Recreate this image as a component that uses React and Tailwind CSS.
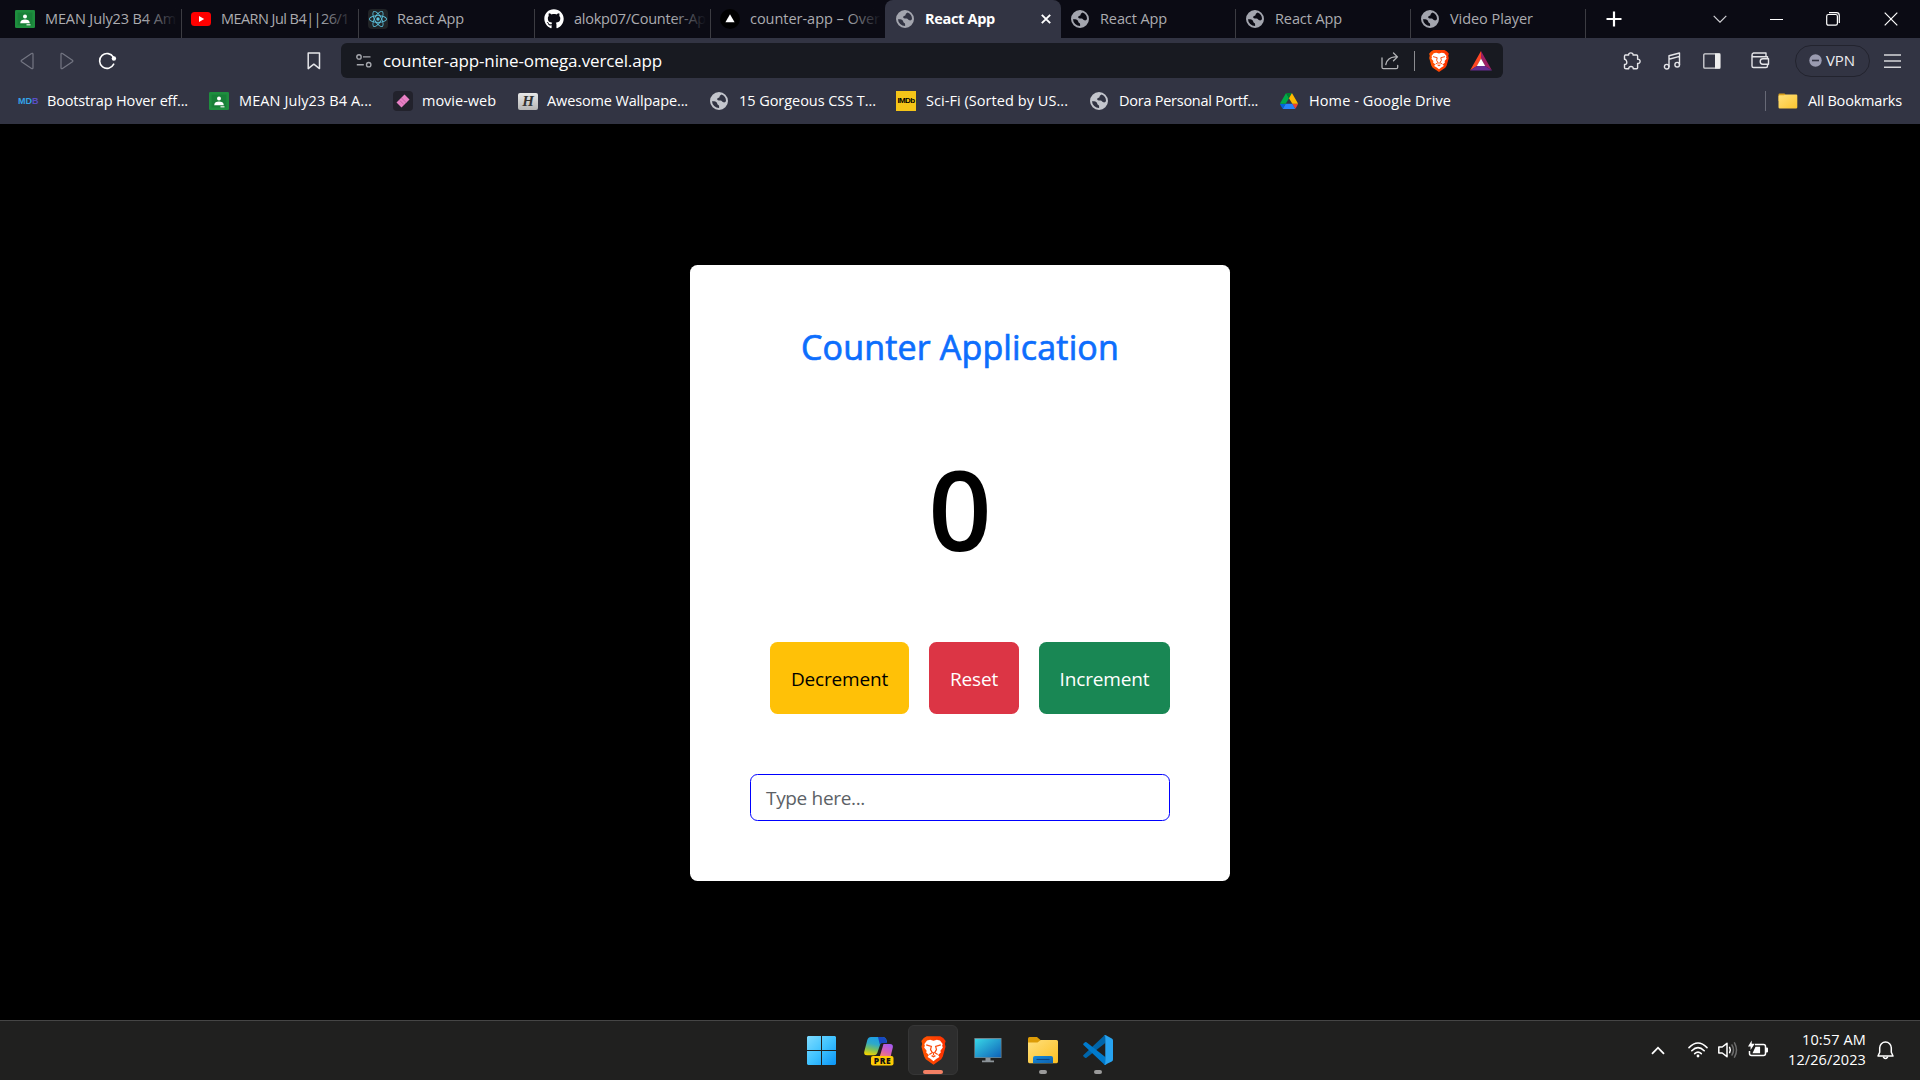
import React, { useLayoutEffect, useRef, useState } from "react";
import { FaGithub } from "react-icons/fa";
import { SiReact } from "react-icons/si";

/* Single line of text, tracked so that it fills the given width. */
function Fit({ w, className = "", children }) {
  const ref = useRef(null);
  const [ls, setLs] = useState(0);
  useLayoutEffect(() => {
    const natural = ref.current.getBoundingClientRect().width;
    setLs((w - natural) / String(children).length);
  }, [w, children]);
  return (
    <span ref={ref} className={"inline-block whitespace-pre shrink-0 " + className} style={{ letterSpacing: ls + "px" }}>
      {children}
    </span>
  );
}

const Classroom = () => (
  <svg className="w-5 h-[18px] block" viewBox="0 0 20 18">
    <rect width="20" height="18" rx="1.2" fill="#1e8e3e" />
    <rect x="2.6" y="2.6" width="14.8" height="12.8" fill="#188038" />
    <circle cx="10" cy="6.6" r="2" fill="#fff" />
    <path d="M5.2 13.2c0-2.600 2.200-3.700 4.800-3.700s4.800 1.100 4.800 3.700z" fill="#fff" />
    <rect x="11.500" y="14.200" width="4" height="1.200" fill="#e8f0e8" />
  </svg>
);

const Youtube = () => (
  <svg className="w-5 h-[14px] block" viewBox="0 0 20 14">
    <rect width="20" height="14" rx="3.500" fill="#f00" />
    <path d="M8 4l5.200 3L8 10z" fill="#fff" />
  </svg>
);

const ReactIcon = () => (
  <span className="w-5 h-5 rounded-sm bg-[#202326] flex items-center justify-center">
    <SiReact className="w-[18px] h-[18px] text-[#5cc4e0]" />
  </span>
);

const Globe = ({ className = "text-[#a3a5ae]" }) => (
  <span className="w-5 h-5 -ml-px flex items-center justify-center">
    <svg viewBox="0 0 18 18" className={"w-[18px] h-[18px] " + className}>
      <path fillRule="evenodd" fill="currentColor" d="M9 0a9 9 0 1 0 0 18A9 9 0 0 0 9 0zM2 9.300c1.700-.3 4 0 4.900 1.400.6 1 .2 1.900 1.300 2.200 1 .3 1 1 .9 3.100A7 7 0 0 1 2 9.300zM11.600 2.500A7 7 0 0 1 16 9c-.4 1.200-1.500 1.700-2.700 1.300-1.500-.5-1.300-1.700-2.700-1.800-1.500 0-3 .2-3.400-1-.4-1.400 1.300-1.300 2-1.900.8-.8.100-1.400.9-2z" />
    </svg>
  </span>
);

const Vercel = () => (
  <svg className="w-5 h-5 block" viewBox="0 0 20 20">
    <circle cx="10" cy="10" r="10" fill="#000" />
    <path d="M10 5.200l4.600 8H5.400z" fill="#fff" />
  </svg>
);

const LION = "M5 1h10l2.200 1.300 1.800 2.200-.6 2 .5 2.200-2 7.300-1.200 2L10 22l-5.700-4-1.200-2L1.100 8.700l.5-2.200-.6-2 1.800-2.200z";
const Brave = ({ className }) => (
  <svg className={className} viewBox="0 0 20 23" preserveAspectRatio="none">
    <defs>
      <linearGradient id="lion" x1="0" x2="1"><stop stopColor="#ff5601" /><stop offset="1" stopColor="#ff3000" /></linearGradient>
    </defs>
    <path d={LION} fill="url(#lion)" />
    <path fill="#fff" d="M10 4.300l2.500-.7 2.300.4 2 2.700-.4 1.300.5 1.300-1.800 2.300.3 1.400-2 1.800 1 1.500-2.400 1.500-2 1.600-2-1.600-2.400-1.500 1-1.500-2-1.800.3-1.400-1.800-2.300.5-1.300-.4-1.300 2-2.700 2.300-.4z" />
    <path d="M4.600 7.300l3.800 1.100-.6 2.400 1.300 2.300-2.200 1.400M15.400 7.300l-3.800 1.100.6 2.400-1.300 2.300 2.200 1.400M8.600 15.300l1.400.9 1.400-.9M10 12.800v2.200" fill="none" stroke="#fb4a0c" strokeWidth=".9" />
  </svg>
);

const Bat = () => (
  <svg className="w-[22px] h-[20px] block" viewBox="0 0 22 20">
    <path d="M11 0L0 19.500 7 15l4-7.200z" fill="#ff4724" />
    <path d="M11 0l11 19.500L15 15l-4-7.200z" fill="#9e1f63" />
    <path d="M0 19.500h22L15.200 15H6.800z" fill="#662d91" />
    <path d="M11 7.600l4.200 7.500H6.800z" fill="#fff" />
  </svg>
);

const Drive = () => (
  <svg className="w-[18px] h-4 block" viewBox="0 0 87.3 78">
    <path d="m6.6 66.850 3.850 6.650c.8 1.400 1.950 2.500 3.300 3.300l13.750-23.800h-27.500c0 1.550.4 3.100 1.200 4.500z" fill="#0066da" />
    <path d="m43.650 25-13.750-23.800c-1.350.8-2.500 1.900-3.300 3.300l-25.400 44a9.060 9.060 0 0 0 -1.200 4.500h27.500z" fill="#00ac47" />
    <path d="m73.550 76.800c1.350-.8 2.500-1.900 3.300-3.300l1.600-2.750 7.650-13.250c.8-1.400 1.200-2.950 1.200-4.500h-27.502l5.852 11.500z" fill="#ea4335" />
    <path d="m43.650 25 13.750-23.800c-1.350-.8-2.900-1.200-4.500-1.200h-18.500c-1.600 0-3.150.45-4.500 1.200z" fill="#00832d" />
    <path d="m59.800 53h-32.300l-13.750 23.800c1.350.8 2.900 1.200 4.500 1.200h50.800c1.600 0 3.150-.45 4.500-1.200z" fill="#2684fc" />
    <path d="m73.400 26.500-12.700-22c-.8-1.400-1.950-2.500-3.300-3.300l-13.750 23.800 16.150 28h27.450c0-1.550-.4-3.100-1.200-4.500z" fill="#ffba00" />
  </svg>
);

const TABS = [
  { icon: <Classroom />, t: "MEAN July23 B4 Am", w: 131, fade: true, box: "w-[182px] pl-[15px]", gap: "w-[30px]" },
  { icon: <Youtube />, t: "MEARN Jul B4||26/1", w: 128, fade: true, box: "w-[177px] pl-[9px]", gap: "w-[30px]" },
  { icon: <ReactIcon />, t: "React App", w: 67, box: "w-[176px] pl-[9px]", gap: "w-[29px]" },
  { icon: <FaGithub className="w-5 h-5 text-white" />, t: "alokp07/Counter-Ap", w: 132, fade: true, box: "w-[176px] pl-[9px]", gap: "w-[30px]" },
  { icon: <Vercel />, t: "counter-app – Over", w: 130, fade: true, box: "w-[174px] pl-[9px]", gap: "w-[30px]", nosep: true },
  { icon: <Globe />, t: "React App", w: 70, active: true, box: "w-[176px] pl-[11px]", gap: "w-[29px]", nosep: true },
  { icon: <Globe />, t: "React App", w: 67, box: "w-[175px] pl-[10px]", gap: "w-[29px]" },
  { icon: <Globe />, t: "React App", w: 67, box: "w-[175px] pl-[10px]", gap: "w-[29px]" },
  { icon: <Globe />, t: "Video Player", w: 83, box: "w-[175px] pl-[10px]", gap: "w-[29px]" },
];

function Tab({ icon, t, w, fade, active, box, gap, nosep }) {
  return (
    <div className={"h-[38px] shrink-0 flex items-center relative " + box + (active ? " bg-[#323443] rounded-t-lg" : "")}>
      <div className={"shrink-0 " + gap}>{icon}</div>
      <div className={"relative h-6 leading-6 flex-1 " + (active ? "text-white font-bold" : "text-[#acacb0]")}>
        <Fit w={w}>{t}</Fit>
        {fade && <div className="absolute right-0 top-0 h-6 w-[38px] bg-linear-to-r from-transparent to-[#0b0b14] to-90%" />}
      </div>
      {active && (
        <svg className="w-[10px] h-[10px] mr-[10px] shrink-0" viewBox="0 0 10 10"><path d="M.8.8l8.400 8.400M9.200.8L.8 9.200" stroke="#fff" strokeWidth="1.900" /></svg>
      )}
      {!nosep && <div className="w-px h-[29px] self-end bg-[#3c3c42]" />}
    </div>
  );
}

const BOOKMARKS = [
  { icon: <span className="block w-5 leading-5 font-['Liberation_Sans'] font-bold text-[9px] tracking-[0px] text-[#35a3e8]">MD<span className="text-[#5a4fc4]">B</span></span>, t: "Bootstrap Hover eff...", w: 141, box: "ml-[18px] w-[191px]", narrow: true },
  { icon: <Classroom />, t: "MEAN July23 B4 A...", w: 133, box: "w-[184px]" },
  { icon: <span className="w-5 h-5 rounded-sm bg-[#22222c] flex items-center justify-center"><svg className="w-4 h-4" viewBox="0 0 16 16"><path d="M9.500 1.500l5 5-8 8-5-5z" fill="#e880c5" /><path d="M6.500 5l5 5M4.800 7.500l4 4" stroke="#b85a9c" strokeWidth=".8" /></svg></span>, t: "movie-web", w: 74, box: "w-[125px]", narrow: true },
  { icon: <span className="flex w-5 h-[17px] rounded-xs bg-linear-to-b from-[#e8e8e8] to-[#b5b5b5] items-center justify-center font-['Liberation_Serif'] italic font-bold text-[15px] text-[#333]">H</span>, t: "Awesome Wallpape...", w: 141, box: "w-[192px]", narrow: true },
  { icon: <Globe className="text-[#c3c5cc]" />, t: "15 Gorgeous CSS T...", w: 137, box: "w-[186px]", narrow: true },
  { icon: <span className="flex w-5 h-5 bg-[#f5c518] items-center justify-center font-['Liberation_Sans'] font-bold text-[8px] tracking-[-0.600px] text-black">IMDb</span>, t: "Sci-Fi (Sorted by US...", w: 142, box: "w-[194px]" },
  { icon: <Globe className="text-[#c3c5cc]" />, t: "Dora Personal Portf...", w: 139, box: "w-[190px]", narrow: true },
  { icon: <Drive />, t: "Home - Google Drive", w: 142, box: "w-[190px]", narrow: true },
];

const Folder = () => (
  <svg className="w-[20px] h-4 block" viewBox="0 0 20 16">
    <defs><linearGradient id="fold" x1="0" y1="0" x2="1" y2="1"><stop stopColor="#ffe07a" /><stop offset="1" stopColor="#fbc52f" /></linearGradient></defs>
    <path d="M.5 1.500Q.5.400 1.500.400H6.500L8.500 2.500H12V8H.5z" fill="#d9a01c" />
    <path d="M.5 3.200Q.5 2.300 1.500 2.300H6L8 1.500H18.200Q19.300 1.500 19.300 2.600V14.200Q19.300 15.500 18 15.500H1.800Q.5 15.500.5 14.200z" fill="url(#fold)" />
  </svg>
);

const sk = { fill: "none", stroke: "#e4e4e8", strokeLinecap: "round", strokeLinejoin: "round" };

function Toolbar() {
  return (
    <div className="h-[44px] pt-[5px] flex items-start shrink-0">
      <div className="h-[35px] w-[341px] flex items-center">
        <svg className="w-[14px] h-[18px] ml-5" viewBox="0 0 14 18"><path d="M13 2.200v13.600c0 .9-.8 1.200-1.500.7L1.600 9.800c-.6-.5-.6-1.100 0-1.600L11.500 1.500c.7-.5 1.500-.2 1.500.7z" fill="none" stroke="#747683" strokeWidth="1.200" /></svg>
        <svg className="w-[14px] h-[18px] ml-[26px]" viewBox="0 0 14 18"><path d="M1 2.200v13.600c0 .9.8 1.200 1.500.7l9.900-6.700c.6-.5.6-1.100 0-1.600L2.500 1.500C1.800 1 1 1.300 1 2.200z" fill="none" stroke="#747683" strokeWidth="1.200" /></svg>
        <svg className="w-[19px] h-[18px] ml-6" viewBox="0 0 19 18"><path d="M15.700 12.200A7.400 7.400 0 1 1 15.400 5.200" fill="none" stroke="#fff" strokeWidth="1.600" strokeLinecap="round" /><circle cx="15.900" cy="6.500" r="2.200" fill="#fff" /></svg>
        <svg className="w-[14px] h-[18px] ml-[190px]" viewBox="0 0 14 18"><path d="M1.200 1h11.300v15.600L6.850 12.200 1.200 16.600z" fill="none" stroke="#e6e6ea" strokeWidth="1.500" strokeLinejoin="round" /></svg>
      </div>
      <div className="h-[35px] w-[1162px] rounded-md bg-[#181a21] flex items-center shrink-0">
        <svg className="w-4 h-4 ml-[15px]" viewBox="0 0 16 16" fill="none" stroke="#a6a8ae" strokeWidth="1.400"><circle cx="3" cy="3.900" r="2.200" /><path d="M7 3.900h7.500M.8 11.700h7M" /><circle cx="12.700" cy="11.700" r="2.200" /></svg>
        <Fit w={279} className="ml-[11px] text-[17px] text-white leading-[35px]">counter-app-nine-omega.vercel.app</Fit>
        <div className="flex-1" />
        <svg className="w-[18px] h-[18px]" viewBox="0 0 18 18" fill="none" stroke="#b4b5b8" strokeWidth="1.300" strokeLinecap="round" strokeLinejoin="round"><path d="M1 6v9.200Q1 16.700 2.500 16.700H15.200Q16.700 16.700 16.700 15.200V13.500M12.500 1l4 3.900-4 3.900M16.200 4.900H14Q6.500 5.200 4.800 12.500" /></svg>
        <div className="w-px h-5 bg-[#8b8c90] ml-[15px]" />
        <Brave className="w-[22px] h-[24px] ml-[13px]" />
        <div className="ml-5 mr-[11px]"><Bat /></div>
      </div>
      <div className="h-[35px] flex items-center">
        <svg className="w-[18px] h-[18px] ml-[120px]" viewBox="0 0 18 18" {...sk} strokeWidth="1.400"><path d="M2 3h3.700C5.400 1.700 6.300.9 7.800.9S10.300 1.700 10 3h3.600q1 0 1 1v3.200c1.600-.2 2.500.7 2.500 2.100s-.9 2.300-2.500 2.100v4.300q0 1-1 1H10.200c.2-1.500-.8-2.200-2.200-2.200s-2.400.7-2.200 2.200H3q-1.500 0-1.500-1.200v-3c1.500.1 2.300-.8 2.300-2.100S3 7.200 1.500 7.300V4z" /></svg>
        <svg className="w-[18px] h-[18px] ml-[22px]" viewBox="0 0 18 18" {...sk} strokeWidth="1.400"><path d="M6 14.500V3.800L16.500 1v11.500M6 7.200l10.500-2.800" /><circle cx="3.700" cy="14.700" r="2.300" /><circle cx="14.200" cy="12.700" r="2.300" /></svg>
        <svg className="w-[18px] h-4 ml-[22px]" viewBox="0 0 18 16"><rect x=".8" y=".8" width="16" height="14.400" rx="1" fill="none" stroke="#d8d8dc" strokeWidth="1.300" /><path d="M12 .4h5.300v15.200H12z" fill="#eee" /></svg>
        <svg className="w-[19px] h-[17px] ml-[30px]" viewBox="0 0 19 17" {...sk} strokeWidth="1.400"><path d="M16.500 6.500V4.700H2.500Q1 4.700 1 3T2.500 1H15v3.500M1 3v11Q1 15.500 2.500 15.500H15Q16.500 15.500 16.500 14v-1.500M17.500 6.700H11.800Q9.200 6.700 9.200 9.400T11.800 12.200H17.500z" /></svg>
        <div className="w-[75px] h-8 ml-[25px] rounded-full border border-[#22232e] flex items-center">
          <svg className="w-[13px] h-[13px] ml-[13px]" viewBox="0 0 13 13"><circle cx="6.500" cy="6.500" r="6.200" fill="#9a9bb0" /><path d="M3 6.500h7" stroke="#323443" strokeWidth="1.600" /></svg>
          <Fit w={29} className="ml-1 text-[15px] text-[#ececf0] leading-[28px] -mt-0.5">VPN</Fit>
        </div>
        <svg className="w-[17px] h-4 ml-[14px]" viewBox="0 0 17 16"><path d="M0 2h17M0 8h17M0 14.300h17" stroke="#d6d6da" strokeWidth="1.500" /></svg>
      </div>
    </div>
  );
}

const Windows = () => (
  <svg className="w-[29px] h-[29px]" viewBox="0 0 29 29">
    <defs><linearGradient id="win" gradientUnits="userSpaceOnUse" x1="0" y1="0" x2="29" y2="29"><stop stopColor="#7fdcff" /><stop offset=".5" stopColor="#3fc2ff" /><stop offset="1" stopColor="#0a94f5" /></linearGradient></defs>
    <path fill="url(#win)" d="M1 0h13v14H0V1zM15 0h13l1 1v13H15zM0 15h14v14H1l-1-1zM15 15h14v13l-1 1H15z" />
  </svg>
);

const Copilot = () => (
  <svg className="w-[30px] h-[30px]" viewBox="0 0 30 30">
    <defs>
      <linearGradient id="cpa" x1="0.6" y1="0" x2=".3" y2="1"><stop stopColor="#1b9de8" /><stop offset=".4" stopColor="#2fa9c9" /><stop offset=".7" stopColor="#7cc05a" /><stop offset="1" stopColor="#f2d400" /></linearGradient>
      <linearGradient id="cpb" x1=".7" y1="0" x2=".3" y2="1"><stop stopColor="#a65bf0" /><stop offset=".5" stopColor="#d65fb5" /><stop offset="1" stopColor="#ff8a5c" /></linearGradient>
    </defs>
    <path d="M7 1h12q2.500 0 3.300 2.500L23 6h-4q-2 0-2.700 2l-3 9q-.8 2.300-3.300 2.300H3Q-.5 19.300.3 15.500L3.300 4Q4.200 1 7 1z" fill="url(#cpa)" />
    <path d="M14 1h5q2.500 0 3.300 2.500L23 7h-4.500q-2 0-2.700 1.500z" fill="#1748c0" />
    <path d="M19.500 8H26q3.500 0 2.800 3.500L26.500 21q-.5 2-2.500 2h-9z" fill="url(#cpb)" />
    <rect x="7" y="20" width="22.500" height="9.500" rx="2" fill="#ffcb05" />
    <text x="18.200" y="27.800" textAnchor="middle" fontFamily="Open Sans" fontWeight="800" fontSize="8.500" fill="#111" textLength="17">PRE</text>
  </svg>
);

const Monitor = () => (
  <svg className="w-[28px] h-[25px]" viewBox="0 0 28 25">
    <defs><linearGradient id="mon" x1="0" y1="0" x2="1" y2="1"><stop stopColor="#38d6e6" /><stop offset="1" stopColor="#0f62b8" /></linearGradient></defs>
    <rect x=".3" y="0" width="27.200" height="20" fill="#6f8690" rx=".6" />
    <rect x="1" y="1" width="25.800" height="18.200" fill="url(#mon)" />
    <path d="M11.500 20h5v2.500h3.500v1.700H8v-1.700h3.500z" fill="#8d9499" />
  </svg>
);

const Explorer = () => (
  <svg className="w-[30px] h-[27px]" viewBox="0 0 30 27">
    <defs>
      <linearGradient id="exa" x1="0" y1="0" x2="1" y2="1"><stop stopColor="#ffe07c" /><stop offset="1" stopColor="#fcbf22" /></linearGradient>
      <linearGradient id="exb" x1="0" y1="0" x2="1" y2="1"><stop stopColor="#1689d8" /><stop offset="1" stopColor="#0e62b0" /></linearGradient>
    </defs>
    <path d="M0 1.500Q0 0 1.500 0H9l4 3.500V8H0z" fill="#dd9c07" />
    <path d="M0 5.500h9.500L12.800 3H28.500Q30 3 30 4.500v20Q30 26.300 28.500 26.300H1.500Q0 26.300 0 24.500z" fill="url(#exa)" />
    <path d="M5 26.300V21q0-2 2-2H23q2 0 2 2v5.300z" fill="url(#exb)" />
    <path d="M8.500 22.500h13" stroke="#0b4584" strokeWidth="1.100" />
  </svg>
);

const VsCode = () => (
  <svg className="w-[30px] h-[30px]" viewBox="0 0 30 30">
    <path d="M22.300 8L3.500 22.800Q2.700 23.400 2 22.800L.5 21.400Q-.2 20.600.5 20L21.300.6Q22.200-.2 23.300.3z" fill="#0065a9" />
    <path d="M22.300 22L3.500 7.200Q2.700 6.600 2 7.200L.5 8.600Q-.2 9.400.5 10L21.300 29.400Q22.200 30.200 23.300 29.700z" fill="#007acc" />
    <path d="M22 29.800l6.800-3.300Q30 25.900 30 24.600V5.400Q30 4.100 28.800 3.500L22.800.3Q21.500-.2 20.600.8 22.300.2 22.300 2v26q0 1.700-1.700 1.200z" fill="#27a3f0" />
  </svg>
);

function App() {
  return (
    <div className="w-[1920px] h-[1080px] overflow-hidden bg-black flex flex-col font-['Open_Sans','Noto_Sans',sans-serif] text-[14.5px]">
      <div className="h-[38px] bg-[#0b0b14] flex items-center shrink-0">
        {TABS.map((t, i) => <Tab key={i} {...t} />)}
        <svg className="w-4 h-4 ml-[20px]" viewBox="0 0 16 16"><path d="M8 .5v15M.5 8h15" stroke="#fff" strokeWidth="2.200" /></svg>
        <svg className="w-[14px] h-2 ml-[91px]" viewBox="0 0 14 8"><path d="M.7.8L7 7.200 13.300.8" fill="none" stroke="#d0d0d4" strokeWidth="1.200" /></svg>
        <div className="w-[13px] h-px bg-white ml-[43px]" />
        <svg className="w-[14px] h-[14px] ml-[43px]" viewBox="0 0 14 14" fill="none" stroke="#fff" strokeWidth="1.200"><rect x=".7" y="2.500" width="10.700" height="10.700" rx="1.700" /><path d="M3 .7h7.500q2.800 0 2.800 2.800V11" /></svg>
        <svg className="w-[14px] h-[14px] ml-[44px]" viewBox="0 0 14 14"><path d="M.7.7l12.600 12.600M13.300.7L.7 13.300" stroke="#fff" strokeWidth="1.200" /></svg>
      </div>

      <div className="h-[86px] bg-[#323443] flex flex-col shrink-0">
        <Toolbar />
        <div className="h-[38px] flex items-center text-white">
          {BOOKMARKS.map((b, i) => (
            <div key={i} className={"flex items-center shrink-0 " + b.box}>
              <div className={"shrink-0 " + (b.narrow ? "w-[29px]" : "w-[30px]")}>{b.icon}</div>
              <Fit w={b.w}>{b.t}</Fit>
            </div>
          ))}
          <div className="flex-1" />
          <div className="w-px h-5 bg-[#676976]" />
          <div className="ml-3 mr-[10px]"><Folder /></div>
          <Fit w={94} className="mr-[18px]">All Bookmarks</Fit>
        </div>
      </div>

      <main className="flex-1 flex justify-center items-start pt-[141px]">
        <section className="w-[540px] h-[616px] bg-white rounded-[7.5px] px-[60px] pt-[59px] flex flex-col">
          <h1 className="h-[46px] leading-[46px] flex justify-center text-[#0d6efd] text-[34px] [-webkit-text-stroke:0.7px_#0d6efd]">
            <Fit w={318}>Counter Application</Fit>
          </h1>
          <div className="mt-[63px] h-[150px] leading-[150px] text-center text-[111px] font-semibold text-black">0</div>
          <div className="mt-[59px] flex justify-end gap-5 text-[19px]">
            <button className="w-[139px] h-[72px] pt-[2px] rounded-[7.5px] bg-[#ffc107] text-black"><Fit w={97}>Decrement</Fit></button>
            <button className="w-[90px] h-[72px] pt-[2px] rounded-[7.5px] bg-[#dc3545] text-white"><Fit w={48}>Reset</Fit></button>
            <button className="w-[131px] h-[72px] pt-[2px] rounded-[7.5px] bg-[#198754] text-white"><Fit w={90}>Increment</Fit></button>
          </div>
          <div className="mt-[60px] h-[47px] rounded-[7.5px] border border-[#0000ff] pl-[15px] pt-[2px] flex items-center text-[19px] text-[#5c6166]">
            <Fit w={99}>Type here...</Fit>
          </div>
        </section>
      </main>

      <footer className="h-[60px] bg-[#20201f] border-t border-[#454545] flex items-start shrink-0 text-white">
        <div className="flex items-start ml-[807px] h-[59px]">
          <div className="pt-[15px]"><Windows /></div>
          <div className="pt-[15px] ml-7"><Copilot /></div>
          <div className="mt-1 ml-[14px] w-[50px] h-[50px] rounded-md bg-[#2d2d2d] border border-[#363636] flex flex-col items-center">
            <Brave className="w-[27px] h-[31px] mt-[9px]" />
            <div className="mt-1 w-5 h-1 rounded-full bg-[#f38064]" />
          </div>
          <div className="pt-[17px] ml-4"><Monitor /></div>
          <div className="pt-4 ml-[26px] flex flex-col items-center"><Explorer /><div className="mt-[6px] w-2 h-1 rounded-full bg-[#9a9a9a]" /></div>
          <div className="pt-[14px] ml-[25px] flex flex-col items-center"><VsCode /><div className="mt-[5px] w-2 h-1 rounded-full bg-[#9a9a9a]" /></div>
        </div>
        <div className="flex-1" />
        <div className="flex items-center h-[58px]">
          <svg className="w-[14px] h-[9px] mr-[23px]" viewBox="0 0 14 9"><path d="M1 7.800L7 1.700l6 6.100" fill="none" stroke="#fff" strokeWidth="1.800" /></svg>
          <svg className="w-5 h-4 mr-[10px]" viewBox="0 0 20 16" fill="none" stroke="#fff" strokeWidth="1.600" strokeLinecap="round"><path d="M1 5.600Q10-3.600 19 5.600M3.800 8.700q6.200-6 12.400 0M6.700 11.600q3.300-3 6.600 0" /><circle cx="10" cy="14" r="1.400" fill="#fff" stroke="none" /></svg>
          <svg className="w-5 h-[18px] mr-[10px]" viewBox="0 0 20 18" fill="none" stroke="#fff" strokeWidth="1.500" strokeLinecap="round" strokeLinejoin="round"><path d="M.8 6v6h3.400L9 15.700V2.300L4.200 6z" /><path d="M11.600 6.300q1.500 2.700 0 5.400" /><path d="M14 4q3 5 0 10M16.500 1.800q4 7.200 0 14.400" stroke="#6c6c6c" /></svg>
          <svg className="w-5 h-[18px] mr-[21px] -mt-0.5" viewBox="0 0 20 18"><path d="M7 4.500h8.500q2 0 2 2v7q0 2-2 2H3.500q-2 0-2-2V11" fill="none" stroke="#fff" strokeWidth="1.500" /><path d="M18 7.500h1q1 0 1 1v3q0 1-1 1h-1zM7.500 6.800h4.600v6.400H4.500z" fill="#fff" /><path d="M3.700.5v3.300h3L2.600 10V6.500H0z" fill="#fff" /></svg>
          <div className="w-[77px] flex flex-col items-end leading-5 mr-[11px]">
            <Fit w={64}>10:57 AM</Fit>
            <Fit w={78}>12/26/2023</Fit>
          </div>
          <svg className="w-[17px] h-[19px] mr-[26px]" viewBox="0 0 17 19" fill="none" stroke="#fff" strokeWidth="1.500" strokeLinecap="round" strokeLinejoin="round"><path d="M1 15L2.700 11.300V6.800a5.800 5.800 0 0 1 11.600 0v4.500L16 15z" /><path d="M6.500 16.200q2 2.600 4 0" /></svg>
        </div>
      </footer>
    </div>
  );
}

export default App;
